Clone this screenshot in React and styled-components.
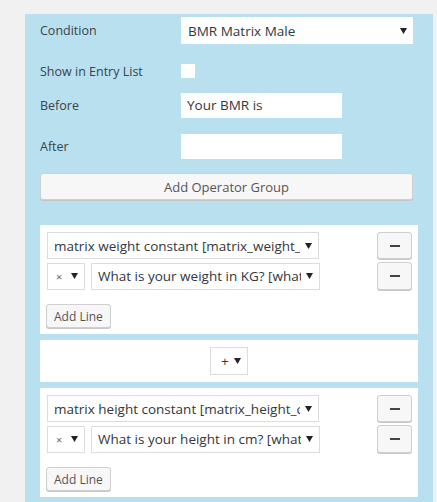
import React from 'react'
import styled, { createGlobalStyle } from 'styled-components'

const Global = createGlobalStyle`
  body {
    margin: 0;
    background: #f1f1f1;
    font-family: 'Open Sans', 'Noto Sans', sans-serif;
    color: #32373c;
  }
`

const Page = styled.div`
  padding: 14px 4px 0 25px;
  height: 488px;
  overflow: hidden;
`

const Panel = styled.div`
  background: #b8e0ef;
  padding: 3px 20px 0 15px;
  height: 100%;
  box-sizing: border-box;
`

const FieldRow = styled.div`
  display: grid;
  grid-template-columns: 141px 1fr;
  align-items: center;
  height: ${p => p.$h}px;
  margin-top: ${p => p.$mt || 0}px;
`

const Label = styled.div`
  font-size: 12.5px;
  color: #3c434a;
`

const TextBox = styled.div`
  width: 161px;
  height: 25px;
  box-sizing: border-box;
  background: #fff;
  font-size: 13.5px;
  line-height: 25px;
  padding-left: 6px;
  color: #32373c;
`

const Checkbox = styled.div`
  width: 14px;
  height: 14px;
  background: #fff;
`

const Select = styled.div`
  display: flex;
  align-items: center;
  box-sizing: border-box;
  width: ${p => p.$w}px;
  height: ${p => p.$h || 27}px;
  background: #fff;
  border: ${p => (p.$plain ? 'none' : '1px solid #dcdcdc')};
  padding: 0 6px 0 ${p => p.$pl || 6}px;
  font-size: ${p => p.$fs || 13.5}px;
  color: #32373c;
  gap: 5px;
`

const SelectText = styled.span`
  flex: 1;
  overflow: hidden;
  white-space: nowrap;
  color: ${p => (p.$muted ? '#666' : 'inherit')};
  font-size: ${p => (p.$small ? '11px' : 'inherit')};
`

const Arrow = () => (
  <svg width="7" height="6" viewBox="0 0 7 6">
    <path d="M0 0H7L3.5 6Z" fill="#222" />
  </svg>
)

const WideButton = styled.div`
  height: 27px;
  margin-top: 14px;
  box-sizing: border-box;
  background: #f7f7f7;
  border: 1px solid #d0d0d0;
  border-radius: 3px;
  box-shadow: 0 1px 0 #c5c5c5;
  display: flex;
  align-items: center;
  justify-content: center;
  font-size: 13px;
  color: #555;
`

const Box = styled.div`
  background: #fff;
  margin: ${p => p.$mt}px -5px 0 0;
  padding: 7px 6px 6px 7px;
`

const OperatorBox = styled.div`
  background: #fff;
  margin: 6px -5px 0 0;
  height: 42px;
  display: flex;
  align-items: center;
  justify-content: center;
`

const LineRow = styled.div`
  display: flex;
  align-items: center;
  margin-top: ${p => p.$mt || 0}px;
`

const Selects = styled.div`
  display: flex;
  gap: 6px;
  flex: 1;
`

const MinusButton = styled.div`
  width: 35px;
  height: ${p => p.$h || 27}px;
  box-sizing: border-box;
  background: #f7f7f7;
  border: 1px solid #cfcfcf;
  border-radius: 3px;
  box-shadow: 0 1px 0 #c8c8c8;
  display: flex;
  align-items: center;
  justify-content: center;
  &::before {
    content: '';
    width: 10px;
    height: 2px;
    background: #444;
  }
`

const SmallButton = styled.div`
  display: inline-flex;
  align-items: center;
  height: 24px;
  box-sizing: border-box;
  margin-top: 14px;
  margin-left: -1px;
  padding: 0 7px;
  background: #f7f7f7;
  border: 1px solid #cfcfcf;
  border-radius: 3px;
  box-shadow: 0 1px 0 #c8c8c8;
  font-size: 12px;
  color: #555;
`

const Group = ({ first, second }) => (
  <>
    <LineRow>
      <Selects>
        <Select $w={272}>
          <SelectText>{first}</SelectText>
          <Arrow />
        </Select>
      </Selects>
      <MinusButton />
    </LineRow>
    <LineRow $mt={3}>
      <Selects>
        <Select $w={38} $pl={8}>
          <SelectText $muted $small>×</SelectText>
          <Arrow />
        </Select>
        <Select $w={229}>
          <SelectText>{second}</SelectText>
          <Arrow />
        </Select>
      </Selects>
      <MinusButton $h={28} />
    </LineRow>
    <SmallButton>Add Line</SmallButton>
  </>
)

export default function App() {
  return (
    <>
      <Global />
      <Page>
        <Panel>
          <FieldRow $h={27}>
            <Label>Condition</Label>
            <Select $w={232} $plain $pl={7}>
              <SelectText>BMR Matrix Male</SelectText>
              <Arrow />
            </Select>
          </FieldRow>
          <FieldRow $h={28} $mt={13}>
            <Label>Show in Entry List</Label>
            <Checkbox />
          </FieldRow>
          <FieldRow $h={25} $mt={8}>
            <Label>Before</Label>
            <TextBox>Your BMR is</TextBox>
          </FieldRow>
          <FieldRow $h={25} $mt={16}>
            <Label>After</Label>
            <TextBox />
          </FieldRow>
          <WideButton>Add Operator Group</WideButton>
          <Box $mt={25}>
            <Group
              first="matrix weight constant [matrix_weight_"
              second="What is your weight in KG? [what"
            />
          </Box>
          <OperatorBox>
            <Select $w={38} $h={28} $pl={10}>
              <SelectText>+</SelectText>
              <Arrow />
            </Select>
          </OperatorBox>
          <Box $mt={6}>
            <Group
              first="matrix height constant [matrix_height_c"
              second="What is your height in cm? [what"
            />
          </Box>
          <Box $mt={6} />
        </Panel>
      </Page>
    </>
  )
}
